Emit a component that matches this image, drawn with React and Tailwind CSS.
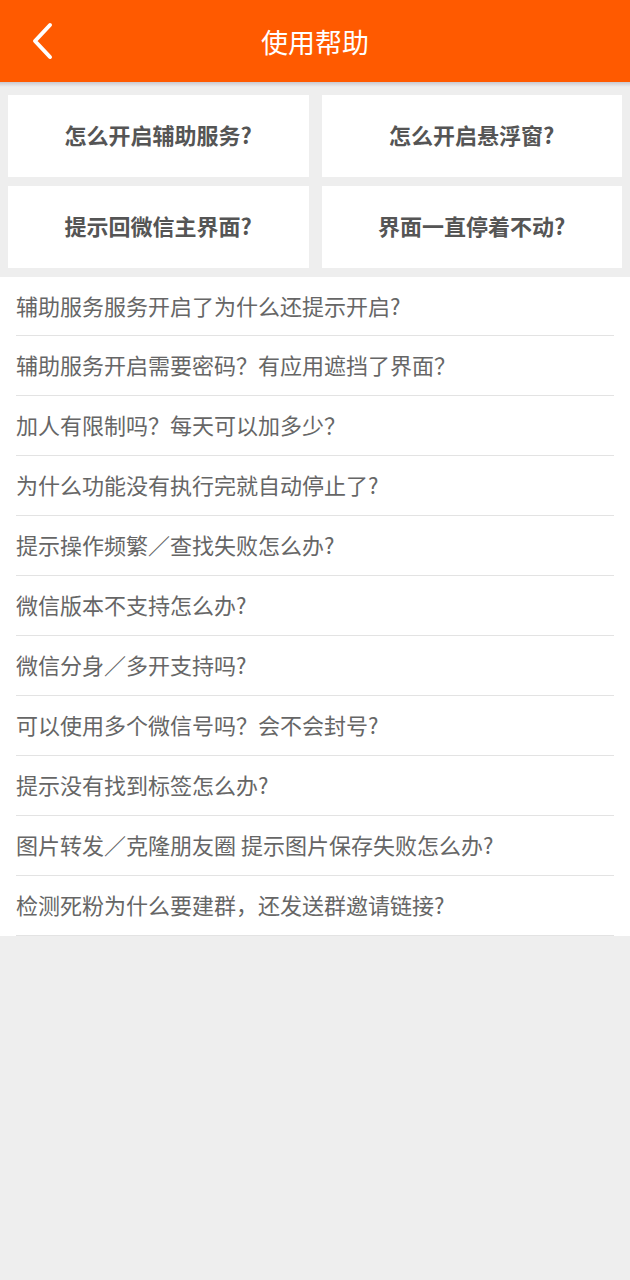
// App.jsx

const quick = [
  '怎么开启辅助服务?',
  '怎么开启悬浮窗?',
  '提示回微信主界面?',
  '界面一直停着不动?',
];

const questions = [
  '辅助服务服务开启了为什么还提示开启?',
  '辅助服务开启需要密码？有应用遮挡了界面？',
  '加人有限制吗？每天可以加多少？',
  '为什么功能没有执行完就自动停止了?',
  '提示操作频繁／查找失败怎么办?',
  '微信版本不支持怎么办?',
  '微信分身／多开支持吗?',
  '可以使用多个微信号吗？会不会封号?',
  '提示没有找到标签怎么办?',
  '图片转发／克隆朋友圈 提示图片保存失败怎么办?',
  '检测死粉为什么要建群，还发送群邀请链接?',
];

export default function App() {
  return (
    <div
      className="min-h-[1280px] bg-[#eeeeee]"
      style={{ fontFamily: '"Noto Sans CJK SC", "Noto Sans", sans-serif' }}
    >
      {/* ======= Header ======= */}
      <header className="relative h-[82px] bg-[#ff5a00] flex items-center justify-center">
        <button className="absolute left-[28px] top-[20px] w-[30px] h-[42px] flex items-center justify-center">
          <svg width="26" height="40" viewBox="0 0 26 40" fill="none">
            <path d="M20 4 L5 20 L20 36" stroke="white" strokeWidth="4" strokeLinecap="round" strokeLinejoin="round" />
          </svg>
        </button>
        <h1 className="text-[27px] text-white leading-none">使用帮助</h1>
      </header>
      <div className="h-[5px] bg-gradient-to-b from-[#c9c9d0] to-[#eeeeee]" />

      {/* ======= Quick entries ======= */}
      <div className="grid grid-cols-2 gap-x-[13px] gap-y-[9px] px-[8px] pt-[8px] pb-[9px]">
        {quick.map((q) => (
          <div key={q} className="h-[82px] bg-white flex items-center justify-center">
            <span className="text-[22px] font-bold text-[#555555] -mt-[3px]">{q}</span>
          </div>
        ))}
      </div>

      {/* ======= Question list ======= */}
      <ul className="bg-white">
        {questions.map((q, i) => (
          <li
            key={q}
            className={
              i === 0
                ? 'mx-[16px] h-[59px] border-b border-[#e3e3e3] flex items-center'
                : 'mx-[16px] h-[60px] border-b border-[#e3e3e3] flex items-center'
            }
          >
            <span className="text-[22px] text-[#666666] leading-none -mt-[3px]">{q}</span>
          </li>
        ))}
      </ul>
    </div>
  );
}
